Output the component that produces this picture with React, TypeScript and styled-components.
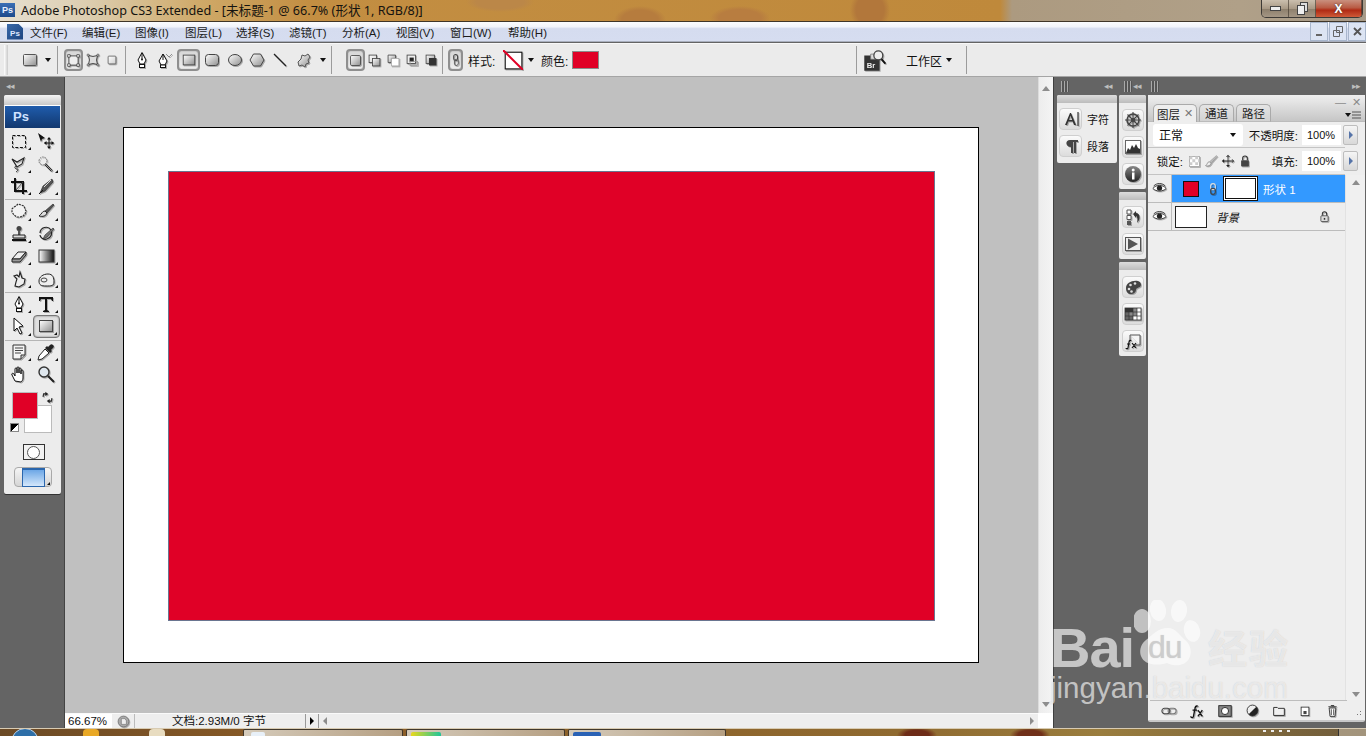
import React from "react";
import styled, { createGlobalStyle } from "styled-components";

const Global = createGlobalStyle`
  html, body { margin: 0; padding: 0; background: #646464; }
  * { box-sizing: border-box; }
`;

const CJK = `"Liberation Sans", "Noto Sans CJK SC", sans-serif`;

const Screen = styled.div`
  position: relative;
  width: 1366px;
  height: 736px;
  overflow: hidden;
  display: flex;
  flex-direction: column;
  font-family: ${CJK};
  font-size: 12px;
  color: #111;
  background: #646464;
`;

/* ---------- title bar ---------- */
const TitleBar = styled.header`
  height: 22px;
  flex: none;
  display: flex;
  align-items: flex-start;
  border-bottom: 1px solid #3f3528;
  background:
    radial-gradient(ellipse 26px 14px at 640px 20px, #b67c3e 0 70%, transparent 100%),
    radial-gradient(ellipse 34px 10px at 500px 2px, #bb8748 0 70%, transparent 100%),
    radial-gradient(ellipse 20px 22px at 870px 10px, #b2773b 0 70%, transparent 100%),
    radial-gradient(ellipse 30px 12px at 740px 18px, #b87d40 0 70%, transparent 100%),
    linear-gradient(90deg, #e6dfd0 0, #dccdaf 90px, #cfa968 200px, #c38e42 310px, #bf893b 1000px, #ac9a80 1012px, #b0a088 1240px, #a79a88 1366px);
`;
const AppIcon = styled.div`
  width: 15px;
  height: 14px;
  margin: 3px 6px 0 0;
  background: linear-gradient(#3b6fb5, #1d4a8c);
  color: #e8f0ff;
  font: bold 9px/14px "Liberation Sans", sans-serif;
  text-align: center;
`;
const TitleText = styled.div`
  font-family: "Noto Sans", "Noto Sans CJK SC", sans-serif;
  font-size: 12.6px;
  line-height: 21px;
  color: #15130f;
  white-space: nowrap;
`;
const WindowButtons = styled.div`
  margin-left: auto;
  margin-right: 3px;
  display: flex;
  height: 18px;
  border: 1px solid #3d3a36;
  border-top: none;
  border-radius: 0 0 5px 5px;
  overflow: hidden;
`;
const WinBtn = styled.div<{ $w: number; $close?: boolean }>`
  width: ${(p) => p.$w}px;
  display: flex;
  align-items: center;
  justify-content: center;
  border-right: 1px solid rgba(60, 50, 40, 0.6);
  color: #fff;
  font: bold 12px "Liberation Sans", sans-serif;
  text-shadow: 0 0 2px #333;
  background: ${(p) =>
    p.$close
      ? "linear-gradient(#c9907e, #b95c45 45%, #b02a14 60%, #cf5a38)"
      : "linear-gradient(#cbbfae, #a99a86 50%, #8e806d 55%, #a49684)"};
`;

/* ---------- menu bar ---------- */
const MenuBar = styled.nav`
  height: 20px;
  flex: none;
  display: flex;
  align-items: center;
  padding-left: 7px;
  background: linear-gradient(#fbfcfe 0, #f2f4fa 25%, #d5dcef 35%, #d6ddf0 100%);
  border-bottom: 1px solid #a9afbd;
`;
const DocIcon = styled.div`
  position: relative;
  width: 16px;
  height: 16px;
  margin-right: 7px;
  background: linear-gradient(135deg, #3a69a8, #1b4480);
  color: #dfe9ff;
  font: bold 8px/20px "Liberation Sans", sans-serif;
  text-align: center;
  clip-path: polygon(0 0, 70% 0, 100% 30%, 100% 100%, 0 100%);
`;
const MenuItem = styled.span<{ $w: number }>`
  width: ${(p) => p.$w}px;
  flex: none;
  font-size: 11.5px;
  white-space: nowrap;
  color: #1c1c1c;
`;
const MdiButtons = styled.div`
  margin-left: auto;
  display: flex;
  gap: 1px;
  height: 19px;
`;
const MdiBtn = styled.div`
  width: 18px;
  height: 19px;
  border: 1px solid #a8b6cc;
  background: #dce4f3;
  display: flex;
  align-items: center;
  justify-content: center;
  color: #555;
`;

/* ---------- options bar ---------- */
const OptionsBar = styled.div`
  height: 34px;
  flex: none;
  display: flex;
  align-items: stretch;
  margin-top: 1px;
  background: #ebebeb;
  border-top: 1px solid #f8f8f8;
  border-bottom: 1px solid #a5a5a5;
`;
const OptGroup = styled.div<{ $w: number; $pl?: number }>`
  width: ${(p) => p.$w}px;
  flex: none;
  display: flex;
  align-items: center;
  padding-left: ${(p) => p.$pl ?? 0}px;
  margin: 2px 0;
  border-right: 1px solid #9b9b9b;
`;
const Grip = styled.div`
  width: 4px;
  height: 30px;
  margin: 0 10px 0 4px;
  background: linear-gradient(90deg, #fff, #c9c9c9);
`;
const Slot = styled.div<{ $w: number; $on?: boolean }>`
  width: ${(p) => p.$w}px;
  height: 22px;
  flex: none;
  display: flex;
  align-items: center;
  justify-content: center;
  border-radius: 4px;
  ${(p) =>
    p.$on
      ? "border: 2px solid #8f8f8f; background: linear-gradient(#d6d6d6, #efefef); box-shadow: inset 0 0 1px #666;"
      : ""}
`;
const OptLabel = styled.span<{ $w: number; $ml?: number }>`
  width: ${(p) => p.$w}px;
  margin-left: ${(p) => p.$ml ?? 0}px;
  flex: none;
  font-size: 12px;
  white-space: nowrap;
  color: #111;
`;
const Caret = styled.span<{ $w?: number }>`
  width: ${(p) => p.$w ?? 9}px;
  flex: none;
  display: flex;
  justify-content: center;
  &::after {
    content: "";
    border-left: 3.5px solid transparent;
    border-right: 3.5px solid transparent;
    border-top: 4px solid #111;
  }
`;
const ColorChip = styled.div`
  width: 27px;
  height: 18px;
  flex: none;
  background: #e00026;
  border: 1px solid #8b8b8b;
`;

/* ---------- work area ---------- */
const Work = styled.main`
  flex: 1;
  min-height: 0;
  display: flex;
`;
const LeftDock = styled.aside`
  width: 65px;
  flex: none;
  background: #646464;
  border-right: 1px solid #444;
  padding-left: 4px;
`;
const GripRow = styled.div<{ $pl?: number }>`
  height: 18px;
  display: flex;
  align-items: center;
  padding: 0 5px 0 ${(p) => p.$pl ?? 2}px;
  color: #bdbdbd;
  font-size: 9px;
  letter-spacing: -1px;
`;
const GripLines = styled.span`
  width: 8px;
  height: 11px;
  background: repeating-linear-gradient(90deg, #a9a9a9 0 1px, #555 1px 3px);
`;
const Arrows = styled.span`
  margin-left: auto;
  display: flex;
`;
const ToolPanel = styled.div`
  width: 57px;
  height: 399px;
  background: #ececec;
  border-radius: 2px;
  box-shadow: 0 1px 0 #333;
`;
const PanelCap = styled.div`
  height: 10px;
  background: linear-gradient(#f4f4f4, #c9c9c9);
  border-radius: 3px 3px 0 0;
`;
const PsBadge = styled.div`
  height: 23px;
  margin: 0 1px;
  padding-left: 8px;
  background: linear-gradient(#1f5cac, #12386f);
  border-top: 1px solid #fff;
  color: #cfe2ff;
  font: bold 13px/22px "Liberation Sans", sans-serif;
`;
const ToolGrid = styled.div`
  display: grid;
  grid-template-columns: 27px 27px;
  justify-content: center;
  padding-top: 2px;
`;
const ToolRule = styled.div`
  grid-column: 1 / -1;
  height: 3px;
  margin: 0 -1px;
  border-bottom: 1px solid #b5b5b5;
`;
const ToolCell = styled.div<{ $on?: boolean; $mark?: boolean }>`
  position: relative;
  height: 22.4px;
  display: flex;
  align-items: center;
  justify-content: center;
  border-radius: 4px;
  ${(p) => (p.$on ? "border: 1px solid #777; box-shadow: inset 0 0 2px #666; background: #e0e0e0;" : "")}
  ${(p) =>
    p.$mark
      ? `&::after { content: ""; position: absolute; right: 2px; bottom: 2px; border-left: 3px solid transparent; border-bottom: 3px solid #111; }`
      : ""}
`;
const SwatchArea = styled.div`
  position: relative;
  height: 52px;
  margin-top: 7px;
`;
const FgSwatch = styled.div`
  position: absolute;
  left: 8px;
  top: 0;
  width: 26px;
  height: 27px;
  background: #e00026;
  border: 1px solid #bbb;
`;
const BgSwatch = styled.div`
  position: absolute;
  left: 20px;
  top: 13px;
  width: 28px;
  height: 28px;
  background: #fff;
  border: 1px solid #bbb;
`;
const SwapIcon = styled.div`
  position: absolute;
  left: 37px;
  top: -1px;
`;
const MiniDefault = styled.div`
  position: absolute;
  left: 6px;
  top: 31px;
  width: 9px;
  height: 9px;
  background: linear-gradient(135deg, #000 55%, #fff 55%);
  border: 1px solid #888;
`;
const MaskBtn = styled.div`
  width: 22px;
  height: 16px;
  margin: 0 auto;
  transform: translateX(1px);
  background: #f2f2f2;
  border: 1px solid #333;
  display: flex;
  align-items: center;
  justify-content: center;
  &::after {
    content: "";
    width: 11px;
    height: 11px;
    border-radius: 50%;
    background: #fff;
    border: 1px solid #555;
  }
`;
const ScreenBtn = styled.div`
  position: relative;
  width: 38px;
  height: 20px;
  margin: 7px 0 0 10px;
  border: 1px solid #a9a9a9;
  border-radius: 4px;
  background: linear-gradient(#f5f5f5, #d5d5d5);
  display: flex;
  justify-content: center;
  align-items: center;
  &::before {
    content: "";
    width: 21px;
    height: 16px;
    background: linear-gradient(#6da7e6, #d4e7fb);
    border: 1px solid #2a66ad;
    border-top-width: 2px;
  }
  &::after {
    content: "";
    position: absolute;
    right: 1px;
    bottom: 1px;
    border-left: 3px solid transparent;
    border-bottom: 3px solid #111;
  }
`;

/* ---------- canvas ---------- */
const Center = styled.section`
  width: 988px;
  flex: none;
  display: grid;
  grid-template-columns: 973px 15px;
  grid-template-rows: 636px 15px;
`;
const Canvas = styled.div`
  background: #c0c0c0;
  padding: 50px 0 0 58px;
`;
const Doc = styled.div`
  width: 856px;
  height: 536px;
  background: #fff;
  border: 1px solid #000;
  padding: 43px 0 0 44px;
`;
const Shape = styled.div`
  width: 767px;
  height: 450px;
  background: #e00026;
  border: 1px solid #6a7590;
`;
const VScroll = styled.div`
  background: linear-gradient(90deg, #ededed, #f4f4f4);
  border-left: 1px solid #dcdcdc;
  display: flex;
  flex-direction: column;
  justify-content: space-between;
  align-items: center;
  padding: 9px 0 6px;
`;
const Tri = styled.span<{ $dir: "up" | "down" | "left" | "right"; $c?: string }>`
  width: 0;
  height: 0;
  ${(p) => {
    const c = p.$c ?? "#8d8d8d";
    if (p.$dir === "up") return `border-left:4px solid transparent;border-right:4px solid transparent;border-bottom:5px solid ${c};`;
    if (p.$dir === "down") return `border-left:4px solid transparent;border-right:4px solid transparent;border-top:5px solid ${c};`;
    if (p.$dir === "left") return `border-top:4px solid transparent;border-bottom:4px solid transparent;border-right:4px solid ${c};`;
    return `border-top:4px solid transparent;border-bottom:4px solid transparent;border-left:4px solid ${c};`;
  }}
`;
const StatusBar = styled.div`
  display: flex;
  align-items: stretch;
  background: #eeeeee;
  border-top: 1px solid #fafafa;
`;
const Zoom = styled.div`
  width: 47px;
  background: #fff;
  padding-left: 3px;
  font-size: 11.5px;
  line-height: 15px;
  white-space: nowrap;
`;
const StatusIcon = styled.div`
  width: 23px;
  display: flex;
  align-items: center;
  justify-content: center;
  border-right: 1px solid #bbb;
`;
const DocInfo = styled.div`
  width: 170px;
  text-align: center;
  font-size: 11.5px;
  line-height: 15px;
  white-space: nowrap;
  padding-right: 2px;
`;
const StatusArrow = styled.div`
  width: 14px;
  display: flex;
  align-items: center;
  justify-content: center;
  border-left: 1px solid #999;
  border-right: 1px solid #999;
`;
const HScroll = styled.div`
  flex: 1;
  display: flex;
  align-items: center;
  justify-content: space-between;
  padding: 0 4px;
`;
const Corner = styled.div`
  background: #fff;
`;

/* ---------- right docks ---------- */
const RightDock = styled.aside`
  flex: 1;
  display: flex;
  background: #646464;
  border-left: 1px solid #3f3f3f;
  padding-left: 3px;
  gap: 2px;
`;
const DockCol = styled.div<{ $w: number }>`
  width: ${(p) => p.$w}px;
  flex: none;
  display: flex;
  flex-direction: column;
`;
const CollapsedPanel = styled.div<{ $h: number }>`
  height: ${(p) => p.$h}px;
  background: #ececec;
  border-radius: 2px;
  margin-bottom: 3px;
  flex: none;
`;
const PanelHead = styled.div`
  height: 8px;
  background: linear-gradient(#dcdcdc, #bcbcbc);
  border-radius: 2px 2px 0 0;
  margin-bottom: 5px;
`;
const PanelHeadBig = styled(PanelHead)`
  margin-bottom: 6px;
`;
const DockRow = styled.div`
  display: flex;
  align-items: center;
  gap: 5px;
  padding-left: 2px;
  margin-bottom: 5px;
`;
const DockBtn = styled.div`
  width: 23px;
  height: 22px;
  flex: none;
  border: 1px solid #cfcfcf;
  border-radius: 4px;
  background: linear-gradient(#fbfbfb, #dcdcdc);
  display: flex;
  align-items: center;
  justify-content: center;
`;
const DockBtnS = styled(DockBtn)`
  margin: 0 auto 5px;
  width: 22px;
`;
const DockText = styled.span`
  font-size: 11px;
  color: #111;
`;

const Layers = styled.div`
  position: relative;
  width: 217px;
  height: 627px;
  display: flex;
  flex-direction: column;
  background: #eeeeee;
  border-bottom: 2px solid #c8c8c8;
  border-radius: 2px;
`;
const LayersTop = styled.div`
  position: relative;
  height: 27px;
  flex: none;
  display: flex;
  align-items: flex-end;
  padding: 0 0 0 5px;
  gap: 2px;
  background: linear-gradient(#efefef, #c6c6c6);
  border-bottom: 1px solid #bbb;
`;
const Tab = styled.div<{ $w: number; $on?: boolean }>`
  width: ${(p) => p.$w}px;
  height: 18px;
  margin-bottom: -1px;
  display: flex;
  align-items: center;
  justify-content: center;
  gap: 4px;
  font-size: 11.5px;
  border: 1px solid #aaa;
  border-bottom: ${(p) => (p.$on ? "none" : "1px solid #bbb")};
  border-radius: 5px 5px 0 0;
  background: ${(p) => (p.$on ? "#eeeeee" : "linear-gradient(#e4e4e4, #d2d2d2)")};
  color: #222;
`;
const TabX = styled.span`
  color: #777;
  font-size: 11px;
`;
const PanelCtl = styled.div`
  position: absolute;
  top: 2px;
  right: 4px;
  display: flex;
  gap: 6px;
  color: #8a8a8a;
  font-size: 11px;
  line-height: 11px;
`;
const PanelMenu = styled.div`
  position: absolute;
  right: 4px;
  bottom: 2px;
  display: flex;
  align-items: center;
  gap: 1px;
`;
const LayerRow1 = styled.div`
  height: 26px;
  flex: none;
  display: flex;
  align-items: center;
  padding-left: 5px;
  border-bottom: 1px solid #c4c4c4;
  width: 197px;
`;
const LayerRow2 = styled(LayerRow1)`
  height: 27px;
`;
const BlendSelect = styled.div`
  width: 90px;
  height: 22px;
  flex: none;
  background: #fff;
  border-radius: 3px;
  display: flex;
  align-items: center;
  justify-content: space-between;
  padding: 0 6px;
  font-size: 12px;
`;
const FieldLabel = styled.span<{ $w: number }>`
  width: ${(p) => p.$w}px;
  flex: none;
  text-align: right;
  font-size: 11.5px;
  white-space: nowrap;
`;
const NumInput = styled.div`
  width: 39px;
  height: 20px;
  flex: none;
  margin-left: 4px;
  background: #fff;
  font-size: 11px;
  line-height: 20px;
  padding-left: 5px;
  color: #111;
`;
const NumArrow = styled.div`
  width: 15px;
  height: 20px;
  flex: none;
  margin-left: 2px;
  display: flex;
  align-items: center;
  justify-content: center;
  background: linear-gradient(#f5f5f5, #d8d8d8);
  border: 1px solid #bdbdbd;
  border-radius: 2px;
`;
const LockIcons = styled.div`
  display: flex;
  align-items: center;
  gap: 3px;
  width: 75px;
  padding-left: 5px;
  flex: none;
`;
const LayerBody = styled.div`
  flex: 1;
  display: flex;
  min-height: 0;
`;
const LayerList = styled.div`
  width: 197px;
  flex: none;
`;
const LayerRow = styled.div`
  display: flex;
  height: 28px;
  border-bottom: 1px solid #bcbcbc;
`;
const EyeCell = styled.div`
  width: 24px;
  flex: none;
  display: flex;
  align-items: center;
  justify-content: center;
  border-right: 1px solid #bcbcbc;
`;
const LayerMain = styled.div<{ $on?: boolean }>`
  flex: 1;
  display: flex;
  align-items: center;
  background: ${(p) => (p.$on ? "#3399ff" : "transparent")};
  color: ${(p) => (p.$on ? "#fff" : "#111")};
`;
const ShapeThumb = styled.div`
  width: 16px;
  height: 16px;
  margin: 0 7px 0 11px;
  background: #e00026;
  border: 1px solid #111;
`;
const MaskThumb = styled.div`
  width: 35px;
  height: 25px;
  margin: 0 5px 0 3px;
  background: #fff;
  border: 3px double #111;
  outline: 1px solid #111;
  outline-offset: -1px;
`;
const BgThumb = styled.div`
  width: 32px;
  height: 22px;
  margin: 0 9px 0 3px;
  background: #fff;
  border: 1px solid #222;
`;
const LayerName = styled.span<{ $italic?: boolean }>`
  font-size: 11.5px;
  font-style: ${(p) => (p.$italic ? "italic" : "normal")};
  flex: 1;
  white-space: nowrap;
`;
const LayerLock = styled.div`
  margin-right: 14px;
  display: flex;
`;
const LayerScroll = styled.div`
  flex: 1;
  display: flex;
  flex-direction: column;
  justify-content: space-between;
  align-items: center;
  padding: 5px 0 3px;
  border-left: 1px solid #e2e2e2;
  background: #f0f0f0;
`;
const LayersFoot = styled.div`
  height: 20px;
  flex: none;
  display: flex;
  align-items: center;
  padding-left: 7px;
  border-top: 1px solid #bdbdbd;
  width: 197px;
  margin-left: 2px;
`;
const FootSlot = styled.div<{ $w: number }>`
  width: ${(p) => p.$w}px;
  flex: none;
  display: flex;
  align-items: center;
  justify-content: center;
`;
const ResizeGrip = styled.div`
  position: absolute;
  right: 2px;
  bottom: 3px;
  width: 10px;
  height: 10px;
  background-image: radial-gradient(#777 0.7px, transparent 0.8px);
  background-size: 3px 3px;
  clip-path: polygon(100% 0, 100% 100%, 0 100%);
`;

/* ---------- taskbar ---------- */
const Taskbar = styled.footer`
  height: 8px;
  flex: none;
  display: flex;
  align-items: stretch;
  overflow: hidden;
  border-top: 1px solid #d8cbb2;
  background:
    radial-gradient(ellipse 20px 8px at 917px 6px, #6e2c18 0 60%, transparent 100%),
    radial-gradient(ellipse 20px 8px at 1030px 6px, #70301a 0 60%, transparent 100%),
    linear-gradient(90deg, #6b4a26 0, #8b5b26 300px, #8f6a30 900px, #9a7d3e 1100px, #6d5a3b 1366px);
`;
const Orb = styled.div`
  width: 28px;
  height: 28px;
  margin: -1px 0 0 11px;
  border-radius: 50%;
  flex: none;
  border: 1px solid #bcd0e4;
  background: #2e6fa8;
`;
const Quick = styled.div<{ $c: string; $ml: number }>`
  width: 16px;
  height: 16px;
  flex: none;
  margin-left: ${(p) => p.$ml}px;
  background: ${(p) => p.$c};
  border-radius: 4px 4px 0 0;
`;
const TaskBtn = styled.div<{ $w: number; $ml: number }>`
  width: ${(p) => p.$w}px;
  margin-left: ${(p) => p.$ml}px;
  flex: none;
  display: flex;
  justify-content: center;
  background: linear-gradient(90deg, #d5cbbb, #b59f82);
  border: 1px solid #40372b;
  border-bottom: none;
  border-radius: 2px 2px 0 0;
`;
const TaskIcon = styled.div<{ $c: string; $w: number; $ml: number }>`
  width: ${(p) => p.$w}px;
  height: 10px;
  margin: 2px 0 0 ${(p) => p.$ml}px;
  background: ${(p) => p.$c};
  border-radius: 2px 2px 0 0;
`;
const Clock = styled.div`
  margin-left: auto;
  width: 28px;
  margin-top: 1px;
  height: 2px;
  background: repeating-linear-gradient(90deg, #eee 0 3px, transparent 3px 8px);
  margin-right: 47px;
`;
const ShowDesk = styled.div`
  width: 28px;
  flex: none;
  background: rgba(215, 205, 190, 0.5);
  border-left: 1px solid #333;
`;

/* ---------- watermark ---------- */
const Watermark = styled.div`
  position: absolute;
  left: 1050px;
  top: 600px;
  width: 260px;
  height: 110px;
  pointer-events: none;
  color: rgba(255, 255, 255, 0.62);
  text-shadow: 0 0 1px rgba(120, 120, 120, 0.35);
`;
const WmTop = styled.div`
  display: flex;
  align-items: flex-start;
  height: 72px;
`;
const WmBai = styled.span`
  font: bold 56px/44px "Liberation Sans", sans-serif;
  margin-top: 26px;
  letter-spacing: -1px;
  width: 84px;
  flex: none;
`;
const WmPaw = styled.div`
  position: relative;
  width: 74px;
  flex: none;
  height: 72px;
`;
const WmDu = styled.span`
  position: absolute;
  left: 14px;
  top: 30px;
  font: 32px/34px "Liberation Sans", sans-serif;
  color: rgba(205, 205, 205, 0.9);
  letter-spacing: -1px;
`;
const WmCn = styled.span`
  font: bold 39px/44px "Noto Sans CJK SC", sans-serif;
  margin-top: 24px;
  letter-spacing: 2px;
`;
const WmUrl = styled.div`
  font: 29.5px/32px "Liberation Sans", sans-serif;
  white-space: nowrap;
`;

const Svg = styled.svg<{ $s: number }>`
  width: ${(p) => p.$s}px;
  height: ${(p) => p.$s}px;
  flex: none;
  display: block;
  filter: drop-shadow(1px 1px 0.6px rgba(0, 0, 0, 0.28));
`;
const Defs = styled.svg`
  position: absolute;
  width: 0;
  height: 0;
`;

type IconName = keyof typeof P;

const P = {
  shapeBox: <rect x="2.5" y="3.5" width="13" height="11" rx="1" fill="url(#gs)" stroke="#555" />,
  paths: (
    <>
      <rect x="3.5" y="3.5" width="11" height="11" fill="#eee" stroke="#333" />
      <path d="M2 2h3v3H2zM13 2h3v3h-3zM2 13h3v3H2zM13 13h3v3h-3z" fill="#fff" stroke="#222" strokeWidth=".8" />
    </>
  ),
  pathsD: (
    <>
      <path d="M4 4l5 1 5-1-1 5 1 5-5-1-5 1 1-5z" fill="#ddd" stroke="#333" />
      <path d="M2.5 2.5h2v2h-2zM13.5 2.5h2v2h-2zM2.5 13.5h2v2h-2zM13.5 13.5h2v2h-2z" fill="#fff" stroke="#333" strokeWidth=".7" />
    </>
  ),
  smallRect: <rect x="4" y="4" width="10" height="10" rx="1" fill="url(#gl)" stroke="#555" />,
  pen: (
    <>
      <path d="M9 1.5L13 9l-2 4H7L5 9z" fill="#fff" stroke="#111" />
      <path d="M9 2v6" stroke="#111" />
      <circle cx="9" cy="8.5" r="1" fill="#111" />
      <rect x="6.5" y="13.5" width="5" height="3" fill="#fff" stroke="#111" />
    </>
  ),
  freePen: (
    <>
      <path d="M7 3l4 7-2 4H5l-2-4z" fill="#fff" stroke="#111" />
      <path d="M7 3v6" stroke="#111" />
      <rect x="4.5" y="14" width="5" height="2.5" fill="#fff" stroke="#111" />
      <path d="M10 3l3 3 3-3" fill="none" stroke="#777" strokeWidth=".8" />
    </>
  ),
  rect: <rect x="2.5" y="3.5" width="13" height="11" fill="url(#gs)" stroke="#444" />,
  rounded: <rect x="2.5" y="3.5" width="13" height="11" rx="3" fill="url(#gs)" stroke="#444" />,
  ellipse: <ellipse cx="9" cy="9" rx="6.5" ry="5.5" fill="url(#gs)" stroke="#444" />,
  polygon: <path d="M5.5 3h7L16 9l-3.5 6h-7L2 9z" fill="url(#gs)" stroke="#444" />,
  line: <path d="M3 3l12 12" stroke="#222" strokeWidth="1.3" />,
  custom: <path d="M3 11l3-3 1-4 3 1 3-2 2 3-2 3 1 3-3 1-1 3-3-2-3 1z" fill="url(#gs)" stroke="#555" />,
  comb1: <rect x="3" y="3" width="12" height="12" rx="1.5" fill="url(#gs)" stroke="#444" />,
  comb2: (
    <>
      <rect x="2.5" y="2.5" width="9" height="9" fill="url(#gl)" stroke="#444" />
      <rect x="6.5" y="6.5" width="9" height="9" fill="url(#gs)" stroke="#444" />
    </>
  ),
  comb3: (
    <>
      <path d="M2.5 2.5h9v4h-5v5h-4z" fill="url(#gs)" stroke="#444" />
      <rect x="6.5" y="6.5" width="9" height="9" fill="#fff" stroke="#aaa" />
    </>
  ),
  comb4: (
    <>
      <rect x="2.5" y="2.5" width="10" height="10" fill="#eee" stroke="#444" />
      <rect x="5.5" y="5.5" width="5" height="5" fill="#222" />
      <rect x="6" y="10" width="9" height="5" fill="none" stroke="#999" />
    </>
  ),
  comb5: (
    <>
      <rect x="2.5" y="2.5" width="10" height="10" fill="url(#gs)" stroke="#444" />
      <path d="M6 6h9v9H6z" fill="#333" />
    </>
  ),
  link: (
    <>
      <rect x="6" y="2" width="5" height="8" rx="2.5" fill="none" stroke="#444" strokeWidth="1.3" />
      <rect x="7" y="8" width="5" height="8" rx="2.5" fill="none" stroke="#666" strokeWidth="1.3" />
    </>
  ),
  noStyle: (
    <>
      <rect x="2" y="2" width="15" height="15" fill="#fff" stroke="#111" />
      <path d="M0 0l18 18" stroke="#e00026" strokeWidth="1.8" />
    </>
  ),
  bridge: (
    <>
      <path d="M1 5h5l1 2h6v10H1z" fill="#333" />
      <path d="M6 4h4v4H6z" fill="#ddd" stroke="#777" strokeWidth=".6" />
      <circle cx="12" cy="5" r="3.5" fill="#eee" stroke="#444" />
      <path d="M14.5 8l3 3.5" stroke="#111" strokeWidth="1.5" />
      <text x="3" y="15" fontSize="6" fontWeight="bold" fill="#eee" fontFamily="Liberation Sans">Br</text>
    </>
  ),
  marquee: <rect x="2.5" y="3.5" width="13" height="12" fill="none" stroke="#111" strokeDasharray="3 1.6" />,
  move: (
    <>
      <path d="M1 1l7 5-3 1-1 3z" fill="#111" />
      <path d="M12 6v10M7.5 11h9" stroke="#111" />
      <path d="M12 5l-2 2.5h4zM12 17l-2-2.5h4zM7 11l2.5-2v4zM17 11l-2.5-2v4z" fill="#111" />
    </>
  ),
  lasso: (
    <>
      <path d="M2 4l5 3 7-4-2 6-5 3z" fill="none" stroke="#222" strokeWidth="1.1" />
      <path d="M6 11c-2 1-1 3 1 3s1 2-1 3" fill="none" stroke="#222" />
    </>
  ),
  wand: (
    <>
      <path d="M8 9l7 7" stroke="#222" strokeWidth="2.2" />
      <path d="M8 9l7 7" stroke="#eee" strokeWidth=".6" />
      <circle cx="6" cy="6" r="4" fill="none" stroke="#666" strokeDasharray="1.5 1" />
    </>
  ),
  crop: (
    <>
      <path d="M5 1v13h12M1 5h12v12" fill="none" stroke="#111" strokeWidth="2" />
      <path d="M6 13l7-8" stroke="#444" />
    </>
  ),
  slice: (
    <>
      <path d="M15 2L6 9l-3 7 5-2 8-9z" fill="#555" stroke="#222" strokeWidth=".6" />
      <path d="M14 3L7 10" stroke="#ddd" />
      <path d="M2 17l4-4" stroke="#111" />
    </>
  ),
  heal: (
    <path d="M4 5l2-1 2-2 3 1 3 1 1 3 1 2-1 3-2 2-3 1-3 0-3-2-2-3 0-3z" fill="#f2f2f2" stroke="#333" strokeWidth="1.2" strokeDasharray="2 1" />
  ),
  brush: (
    <>
      <path d="M16 2L8 9l2 2 7-8z" fill="#555" stroke="#222" strokeWidth=".6" />
      <path d="M8 9c-3 0-3 3-6 5 4 1 7 0 8-3z" fill="#ddd" stroke="#222" />
    </>
  ),
  stamp: (
    <>
      <circle cx="9" cy="3.5" r="2.5" fill="#444" />
      <path d="M8 6h2v4H8z" fill="#555" />
      <path d="M3 10h12v3H3z" fill="#ddd" stroke="#222" />
      <path d="M2 15h14" stroke="#111" strokeWidth="2" />
    </>
  ),
  history: (
    <>
      <path d="M3 8a6 6 0 0 1 11-3c2 3 0 8-4 9-3 1-7-1-7-4" fill="none" stroke="#222" strokeWidth="1.2" />
      <path d="M16 3l-8 7-2 4 4-2 7-8z" fill="#777" stroke="#222" strokeWidth=".6" />
    </>
  ),
  eraser: (
    <>
      <path d="M2 12l6-7h8l-6 7z" fill="#eee" stroke="#222" />
      <path d="M2 12v3h8l6-7V5l-6 7z" fill="#999" stroke="#222" />
    </>
  ),
  gradient: <rect x="2" y="3" width="15" height="12" fill="url(#gh)" stroke="#333" />,
  smudge: <path d="M10 2l2 6 3 1-1 5-5 3-4-1 1-4 1-3-3-3 3-1 2 2z" fill="#eee" stroke="#222" strokeWidth="1.1" />,
  sponge: (
    <>
      <path d="M2 11c0-4 4-7 9-7s6 4 6 8-3 4-8 4-7-1-7-5z" fill="#eee" stroke="#222" />
      <ellipse cx="7" cy="10" rx="3" ry="2" fill="none" stroke="#444" />
    </>
  ),
  type: <path d="M2 2h14v4h-1l-1-2h-4v11l2 1v1H6v-1l2-1V4H4L3 6H2z" fill="#111" />,
  select: <path d="M4 1l9 8-4 1 3 6-2 1-3-6-3 3z" fill="#fff" stroke="#111" />,
  notes: (
    <>
      <path d="M3 2h12v10l-4 4H3z" fill="#f4f4f4" stroke="#333" />
      <path d="M5 5h8M5 7.5h8M5 10h6" stroke="#444" />
      <path d="M11 16v-4h4" fill="#ccc" stroke="#333" />
    </>
  ),
  dropper: (
    <>
      <path d="M16 2a2 2 0 0 0-3 0l-2 2-1-1-2 2 5 5 2-2-1-1 2-2a2 2 0 0 0 0-3z" fill="#222" />
      <path d="M8 6l-6 7-1 4 4-1 7-6z" fill="#fff" stroke="#222" />
    </>
  ),
  hand: (
    <path d="M5 16L2 10c-1-2 1-2 2-1l1 2V4c0-1.5 2-1.5 2 0v4-5c0-1.5 2-1.5 2 0v5-4c0-1.5 2-1.5 2 0v5-3c0-1.5 2-1.5 2 0v7c0 2-1 3-2 4z" fill="#fff" stroke="#111" />
  ),
  zoom: (
    <>
      <circle cx="7" cy="7" r="5" fill="#dfe7ee" stroke="#333" strokeWidth="1.4" />
      <path d="M11 11l6 6" stroke="#222" strokeWidth="2" />
    </>
  ),
  swap: <path d="M3 3h3V1l4 3-4 3V5H4v3H2zM15 15h-3v2l-4-3 4-3v2h2v-3h2z" fill="#222" />,
  charA: (
    <>
      <path d="M3 15L8 3h1l5 12h-2l-1.3-3.500H6.300L5 15zM7 10h3L8.500 5.500z" fill="#333" />
      <path d="M16 2v14" stroke="#111" />
    </>
  ),
  para: <path d="M8 3h8v2h-2v11h-2V5h-1v11H9v-6C3 10 3 3 8 3z" fill="#444" />,
  nav: (
    <>
      <circle cx="9" cy="9" r="6" fill="none" stroke="#444" strokeWidth="1.5" />
      <circle cx="9" cy="9" r="2" fill="#444" />
      <path d="M9 1v16M1 9h16M3.5 3.5l11 11M14.5 3.5l-11 11" stroke="#444" strokeWidth="1.1" />
    </>
  ),
  histo: (
    <>
      <rect x="1.5" y="2.5" width="15" height="13" fill="#fff" stroke="#666" />
      <path d="M2 15l2-5 2 2 2-5 2 3 2-4 2 4 2 1v4z" fill="#333" />
    </>
  ),
  info: (
    <>
      <circle cx="9" cy="9" r="8" fill="url(#gd)" />
      <rect x="8" y="7.5" width="2.5" height="7" fill="#fff" />
      <circle cx="9.2" cy="5" r="1.5" fill="#fff" />
    </>
  ),
  hist: (
    <>
      <path d="M3 2h4v4H3z" fill="#fff" stroke="#555" />
      <path d="M3 7.5h4v4H3z" fill="#fff" stroke="#555" />
      <path d="M3 13h4v4H3z" fill="#555" />
      <path d="M9 6l3-3v2c4 0 5 6 1 10 1-4 0-7-1-7v2z" fill="#333" />
    </>
  ),
  actions: (
    <>
      <rect x="1.5" y="2.5" width="15" height="13" fill="#eee" stroke="#555" />
      <path d="M4 3.5l10 5.5-10 5.500z" fill="#555" />
    </>
  ),
  palette: (
    <>
      <path d="M2 10C2 5 8 2 14 3c3 1 4 4 2 6-2 1-4 1-4 3s-2 4-5 4-5-2-5-6z" fill="#444" />
      <circle cx="5" cy="11" r="1.3" fill="#ddd" />
      <circle cx="6.5" cy="7" r="1.3" fill="#ddd" />
      <circle cx="11" cy="5.5" r="1.3" fill="#ddd" />
      <circle cx="7.5" cy="13.500" r="1.3" fill="#ddd" />
    </>
  ),
  swatches: (
    <>
      <rect x="1" y="3" width="16" height="12" fill="#fff" />
      <path d="M1 3h8v4H1z" fill="#333" />
      <path d="M1 7h4v8H1zM5 11h4v4H5z" fill="#666" />
      <path d="M9 3h4v4H9zM5 7h8v4H5z" fill="#888" />
      <path d="M1 7h16M1 11h16M5 3v12M9 3v12M13 3v12" stroke="#333" strokeWidth=".7" />
      <rect x="1" y="3" width="16" height="12" fill="none" stroke="#333" strokeWidth=".8" />
    </>
  ),
  fxBox: (
    <>
      <path d="M6 3h10v10" fill="#f5f5f5" stroke="#555" />
      <path d="M6 3v5M11 13h5" stroke="#555" />
      <path d="M5 10c0-2 2-2 2-1M5 10l-1 6c0 1-2 1-2 0M3 12h3M8 11l4 5M12 11l-4 5" fill="none" stroke="#111" strokeWidth="1.2" />
    </>
  ),
  fxPlain: (
    <path d="M7 5c0-2 3-2 3-1M7 5L5 15c0 2-3 2-3 0M4 8h5M10 8l5 7M15 8l-5 7" fill="none" stroke="#111" strokeWidth="1.5" />
  ),
  eye: (
    <>
      <path d="M1 9c4-5 12-5 16 0-4 4-12 4-16 0z" fill="#fff" stroke="#222" />
      <circle cx="9" cy="8.5" r="3.2" fill="#222" />
      <path d="M2 6c4-4 10-4 14 0" fill="none" stroke="#222" />
    </>
  ),
  transparency: (
    <>
      <rect x="2" y="2" width="14" height="14" fill="#fff" stroke="#999" />
      <path d="M2 2h4v4H2zM10 2h4v4h-4zM6 6h4v4H6zM14 6h2v4h-2zM2 10h4v4H2zM10 10h4v4h-4z" fill="#ccc" />
    </>
  ),
  lockBrush: (
    <>
      <path d="M16 2L7 10l2 2 8-9z" fill="#bbb" stroke="#888" strokeWidth=".6" />
      <path d="M7 10c-3 0-2 3-5 5 4 1 6 0 7-3z" fill="#eee" stroke="#888" />
    </>
  ),
  cross: <path d="M9 1l-2.5 3h5zM9 17l-2.5-3h5zM1 9l3-2.5v5zM17 9l-3-2.5v5zM8.500 3h1v12h-1zM3 8.500h12v1H3z" fill="#222" />,
  lock: (
    <>
      <path d="M6 8V5.5a3 3 0 0 1 6 0V8" fill="none" stroke="#333" strokeWidth="1.4" />
      <rect x="4" y="8" width="10" height="8" rx="1" fill="#444" />
    </>
  ),
  lockOpen: (
    <>
      <path d="M6 8V5.5a3 3 0 0 1 6 0V8" fill="none" stroke="#333" strokeWidth="1.4" />
      <rect x="4" y="8" width="10" height="8" rx="1" fill="#ddd" stroke="#333" />
      <rect x="8" y="11" width="2" height="2.5" fill="#333" />
    </>
  ),
  chain: (
    <>
      <rect x="6" y="2" width="6" height="8" rx="3" fill="none" stroke="#ddd" strokeWidth="1.5" />
      <rect x="6" y="8" width="6" height="8" rx="3" fill="none" stroke="#444" strokeWidth="1.5" />
    </>
  ),
  fLink: (
    <>
      <rect x="1" y="6" width="9" height="6" rx="3" fill="none" stroke="#444" strokeWidth="1.2" />
      <rect x="8" y="6" width="9" height="6" rx="3" fill="none" stroke="#777" strokeWidth="1.2" />
    </>
  ),
  fMask: (
    <>
      <rect x="2" y="3" width="14" height="12" fill="#888" stroke="#222" />
      <circle cx="9" cy="9" r="4" fill="#fff" stroke="#222" />
    </>
  ),
  fAdj: (
    <>
      <circle cx="9" cy="9" r="6.5" fill="#eee" stroke="#222" />
      <path d="M13.6 4.4a6.5 6.5 0 0 1-9.2 9.200z" fill="#222" />
    </>
  ),
  fFolder: <path d="M3 5h4l1 1h7v8H3z" fill="#f0f0f0" stroke="#222" />,
  fNew: (
    <>
      <rect x="4" y="4" width="10" height="11" fill="#fff" stroke="#222" />
      <path d="M7 9h4v4H7z" fill="#444" />
    </>
  ),
  fTrash: (
    <>
      <path d="M5 6h8l-1 10H6z" fill="#fff" stroke="#222" />
      <path d="M4 4.5h10M7 3h4M7.5 7.500v7M10.500 7.500v7" stroke="#222" />
    </>
  ),
  status: (
    <>
      <circle cx="9" cy="9" r="7.5" fill="#aaa" stroke="#666" />
      <path d="M6 5h5l2 3v5H6z" fill="#eee" stroke="#555" strokeWidth=".7" />
    </>
  ),
};

const Icon = ({ n, s = 18 }: { n: IconName; s?: number }) => (
  <Svg $s={s} viewBox="0 0 18 18">
    {P[n]}
  </Svg>
);

const menus: [string, number][] = [
  ["文件(F)", 52],
  ["编辑(E)", 53],
  ["图像(I)", 50],
  ["图层(L)", 51],
  ["选择(S)", 53],
  ["滤镜(T)", 53],
  ["分析(A)", 54],
  ["视图(V)", 54],
  ["窗口(W)", 58],
  ["帮助(H)", 50],
];

const toolsA: [IconName, IconName][] = [
  ["marquee", "move"],
  ["lasso", "wand"],
  ["crop", "slice"],
];
const toolsB: [IconName, IconName][] = [
  ["heal", "brush"],
  ["stamp", "history"],
  ["eraser", "gradient"],
  ["smudge", "sponge"],
];
const shapeSlots: [IconName, number, boolean?][] = [
  ["pen", 20],
  ["freePen", 25],
  ["rect", 23, true],
  ["rounded", 23],
  ["ellipse", 23],
  ["polygon", 22],
  ["line", 24],
  ["custom", 23],
];

const Pair = ({ a, b, onB, markA = true, markB = true }: { a: IconName; b: IconName; onB?: boolean; markA?: boolean; markB?: boolean }) => (
  <>
    <ToolCell $mark={markA}>
      <Icon n={a} />
    </ToolCell>
    <ToolCell $mark={markB} $on={onB}>
      <Icon n={b} />
    </ToolCell>
  </>
);

export default function App() {
  return (
    <Screen>
      <Global />
      <Defs aria-hidden="true">
        <defs>
          <linearGradient id="gs" x1="0" y1="0" x2="1" y2="1">
            <stop offset="0" stopColor="#fff" />
            <stop offset="1" stopColor="#8f8f8f" />
          </linearGradient>
          <linearGradient id="gl" x1="0" y1="0" x2="1" y2="1">
            <stop offset="0" stopColor="#fff" />
            <stop offset="1" stopColor="#cfcfcf" />
          </linearGradient>
          <linearGradient id="gh" x1="0" y1="0" x2="1" y2="0">
            <stop offset="0" stopColor="#fff" />
            <stop offset="1" stopColor="#111" />
          </linearGradient>
          <linearGradient id="gd" x1="0" y1="0" x2="0" y2="1">
            <stop offset="0" stopColor="#888" />
            <stop offset="1" stopColor="#222" />
          </linearGradient>
        </defs>
      </Defs>

      <TitleBar>
        <AppIcon>Ps</AppIcon>
        <TitleText>Adobe Photoshop CS3 Extended - [未标题-1 @ 66.7% (形状 1, RGB/8)]</TitleText>
        <WindowButtons>
          <WinBtn $w={27}>
            <svg width="11" height="5" viewBox="0 0 11 5"><rect x=".5" y=".5" width="10" height="4" fill="#eee" stroke="#444" /></svg>
          </WinBtn>
          <WinBtn $w={27}>
            <svg width="11" height="13" viewBox="0 0 11 13"><rect x="3.5" y=".5" width="7" height="9" fill="#ddd" stroke="#444" /><rect x=".5" y="3.5" width="7" height="9" fill="#eee" stroke="#444" /></svg>
          </WinBtn>
          <WinBtn $w={46} $close>X</WinBtn>
        </WindowButtons>
      </TitleBar>

      <MenuBar>
        <DocIcon>Ps</DocIcon>
        {menus.map(([m, w]) => (
          <MenuItem key={m} $w={w}>{m}</MenuItem>
        ))}
        <MdiButtons>
          <MdiBtn>
            <svg width="8" height="8" viewBox="0 0 8 8"><rect x="1" y="6" width="6" height="2" fill="#666" /></svg>
          </MdiBtn>
          <MdiBtn>
            <svg width="10" height="11" viewBox="0 0 10 11"><path d="M3.5.5h6v6h-6zM.5 4.5h6v6h-6z" fill="#dce4f3" stroke="#666" /></svg>
          </MdiBtn>
          <MdiBtn>
            <svg width="9" height="9" viewBox="0 0 9 9"><path d="M1 1l7 7M8 1L1 8" stroke="#555" strokeWidth="1.8" /></svg>
          </MdiBtn>
        </MdiButtons>
      </MenuBar>

      <OptionsBar>
        <OptGroup $w={58}>
          <Grip />
          <Slot $w={24}><Icon n="shapeBox" s={18} /></Slot>
          <Caret $w={12} />
        </OptGroup>
        <OptGroup $w={68} $pl={6}>
          <Slot $w={19} $on><Icon n="paths" s={15} /></Slot>
          <Slot $w={19}><Icon n="pathsD" s={16} /></Slot>
          <Slot $w={20}><Icon n="smallRect" s={14} /></Slot>
        </OptGroup>
        <OptGroup $w={206} $pl={6}>
          {shapeSlots.map(([n, w, on]) => (
            <Slot key={n} $w={w} $on={on}><Icon n={n} s={on ? 16 : 18} /></Slot>
          ))}
          <Caret $w={16} />
        </OptGroup>
        <OptGroup $w={111} $pl={14}>
          <Slot $w={19} $on><Icon n="comb1" s={15} /></Slot>
          <Slot $w={18}><Icon n="comb2" s={15} /></Slot>
          <Slot $w={20}><Icon n="comb3" s={15} /></Slot>
          <Slot $w={18}><Icon n="comb4" s={15} /></Slot>
          <Slot $w={20}><Icon n="comb5" s={15} /></Slot>
        </OptGroup>
        <OptGroup $w={414} $pl={5}>
          <Slot $w={15} $on><Icon n="link" s={14} /></Slot>
          <OptLabel $w={36} $ml={5}>样式:</OptLabel>
          <Slot $w={18}><Icon n="noStyle" s={20} /></Slot>
          <Caret $w={18} />
          <OptLabel $w={31} $ml={1}>颜色:</OptLabel>
          <ColorChip />
        </OptGroup>
        <OptGroup $w={110} $pl={6}>
          <Slot $w={23}><Icon n="bridge" s={23} /></Slot>
          <OptLabel $w={38} $ml={20}>工作区</OptLabel>
          <Caret $w={10} />
        </OptGroup>
      </OptionsBar>

      <Work>
        <LeftDock>
          <GripRow $pl={2}>
            <span>◂◂</span>
          </GripRow>
          <ToolPanel>
            <PanelCap />
            <PsBadge>Ps</PsBadge>
            <ToolGrid>
              {toolsA.map(([a, b], i) => (
                <Pair key={a} a={a} b={b} markB={i > 0} />
              ))}
              <ToolRule />
              {toolsB.map(([a, b]) => (
                <Pair key={a} a={a} b={b} />
              ))}
              <ToolRule />
              <Pair a="pen" b="type" />
              <Pair a="select" b="rect" onB />
              <ToolRule />
              <Pair a="notes" b="dropper" />
              <Pair a="hand" b="zoom" markA={false} markB={false} />
            </ToolGrid>
            <SwatchArea>
              <BgSwatch />
              <FgSwatch />
              <SwapIcon><Icon n="swap" s={13} /></SwapIcon>
              <MiniDefault />
            </SwatchArea>
            <MaskBtn />
            <ScreenBtn />
          </ToolPanel>
        </LeftDock>

        <Center>
          <Canvas>
            <Doc>
              <Shape />
            </Doc>
          </Canvas>
          <VScroll>
            <Tri $dir="up" />
            <Tri $dir="down" />
          </VScroll>
          <StatusBar>
            <Zoom>66.67%</Zoom>
            <StatusIcon><Icon n="status" s={13} /></StatusIcon>
            <DocInfo>文档:2.93M/0 字节</DocInfo>
            <StatusArrow><Tri $dir="right" $c="#000" /></StatusArrow>
            <HScroll>
              <Tri $dir="left" />
              <Tri $dir="right" />
            </HScroll>
          </StatusBar>
          <Corner />
        </Center>

        <RightDock>
          <DockCol $w={60}>
            <GripRow $pl={4}>
              <GripLines />
              <Arrows>◂◂</Arrows>
            </GripRow>
            <CollapsedPanel $h={68}>
              <PanelHead />
              <DockRow>
                <DockBtn><Icon n="charA" /></DockBtn>
                <DockText>字符</DockText>
              </DockRow>
              <DockRow>
                <DockBtn><Icon n="para" /></DockBtn>
                <DockText>段落</DockText>
              </DockRow>
            </CollapsedPanel>
          </DockCol>
          <DockCol $w={27}>
            <GripRow $pl={5}>
              <GripLines />
              <Arrows>◂◂</Arrows>
            </GripRow>
            <CollapsedPanel $h={94}>
              <PanelHeadBig />
              <DockBtnS><Icon n="nav" /></DockBtnS>
              <DockBtnS><Icon n="histo" /></DockBtnS>
              <DockBtnS><Icon n="info" /></DockBtnS>
            </CollapsedPanel>
            <CollapsedPanel $h={67}>
              <PanelHeadBig />
              <DockBtnS><Icon n="hist" /></DockBtnS>
              <DockBtnS><Icon n="actions" /></DockBtnS>
            </CollapsedPanel>
            <CollapsedPanel $h={94}>
              <PanelHeadBig />
              <DockBtnS><Icon n="palette" /></DockBtnS>
              <DockBtnS><Icon n="swatches" /></DockBtnS>
              <DockBtnS><Icon n="fxBox" /></DockBtnS>
            </CollapsedPanel>
          </DockCol>
          <DockCol $w={217}>
            <GripRow $pl={3}>
              <GripLines />
              <Arrows>▸▸</Arrows>
            </GripRow>
            <Layers>
              <LayersTop>
                <Tab $w={44} $on>图层 <TabX>✕</TabX></Tab>
                <Tab $w={35}>通道</Tab>
                <Tab $w={35}>路径</Tab>
                <PanelCtl><span>—</span><span>✕</span></PanelCtl>
                <PanelMenu>
                  <Caret $w={7} />
                  <svg width="9" height="8" viewBox="0 0 9 8"><path d="M0 1h9M0 4h9M0 7h9" stroke="#555" /></svg>
                </PanelMenu>
              </LayersTop>
              <LayerRow1>
                <BlendSelect>
                  正常
                  <Caret $w={8} />
                </BlendSelect>
                <FieldLabel $w={55}>不透明度:</FieldLabel>
                <NumInput>100%</NumInput>
                <NumArrow><Tri $dir="right" $c="#5674a8" /></NumArrow>
              </LayerRow1>
              <LayerRow2>
                <FieldLabel $w={30}>锁定:</FieldLabel>
                <LockIcons>
                  <Icon n="transparency" s={13} />
                  <Icon n="lockBrush" s={14} />
                  <Icon n="cross" s={14} />
                  <Icon n="lock" s={14} />
                </LockIcons>
                <FieldLabel $w={40}>填充:</FieldLabel>
                <NumInput>100%</NumInput>
                <NumArrow><Tri $dir="right" $c="#5674a8" /></NumArrow>
              </LayerRow2>
              <LayerBody>
                <LayerList>
                  <LayerRow>
                    <EyeCell><Icon n="eye" s={15} /></EyeCell>
                    <LayerMain $on>
                      <ShapeThumb />
                      <Icon n="chain" s={14} />
                      <MaskThumb />
                      <LayerName>形状 1</LayerName>
                    </LayerMain>
                  </LayerRow>
                  <LayerRow>
                    <EyeCell><Icon n="eye" s={15} /></EyeCell>
                    <LayerMain>
                      <BgThumb />
                      <LayerName $italic>背景</LayerName>
                      <LayerLock><Icon n="lockOpen" s={13} /></LayerLock>
                    </LayerMain>
                  </LayerRow>
                </LayerList>
                <LayerScroll>
                  <Tri $dir="up" />
                  <Tri $dir="down" />
                </LayerScroll>
              </LayerBody>
              <LayersFoot>
                <FootSlot $w={24}><Icon n="fLink" s={16} /></FootSlot>
                <FootSlot $w={32}><Icon n="fxPlain" s={16} /></FootSlot>
                <FootSlot $w={24}><Icon n="fMask" s={16} /></FootSlot>
                <FootSlot $w={30}><Icon n="fAdj" s={15} /></FootSlot>
                <FootSlot $w={24}><Icon n="fFolder" s={16} /></FootSlot>
                <FootSlot $w={28}><Icon n="fNew" s={14} /></FootSlot>
                <FootSlot $w={26}><Icon n="fTrash" s={15} /></FootSlot>
              </LayersFoot>
              <ResizeGrip />
            </Layers>
          </DockCol>
        </RightDock>
      </Work>

      <Taskbar>
        <Orb />
        <Quick $c="#e9a825" $ml={44} />
        <Quick $c="#e8dcc0" $ml={50} />
        <TaskBtn $w={160} $ml={78}><TaskIcon $c="#e8f0f8" $w={14} $ml={-130} /></TaskBtn>
        <TaskBtn $w={159} $ml={3}><TaskIcon $c="linear-gradient(90deg,#e9d81b,#1fc59a)" $w={30} $ml={-120} /></TaskBtn>
        <TaskBtn $w={158} $ml={3}><TaskIcon $c="#2a62b5" $w={28} $ml={-120} /></TaskBtn>
        <Clock />
        <ShowDesk />
      </Taskbar>

      <Watermark>
        <WmTop>
          <WmBai>Bai</WmBai>
          <WmPaw>
            <svg width="68" height="72" viewBox="0 0 68 72">
              <g fill="rgba(255,255,255,.6)">
                <ellipse cx="8" cy="21" rx="9" ry="12" />
                <ellipse cx="24" cy="10" rx="8" ry="11" transform="rotate(-10 24 10)" />
                <ellipse cx="45" cy="11" rx="8" ry="11" transform="rotate(8 45 11)" />
                <ellipse cx="58" cy="31" rx="8" ry="11" transform="rotate(-15 58 31)" />
                <path d="M34 28c8 0 11 7 17 12 8 6 8 20-2 24-7 3-14 0-16-1-3 1-12 3-19 0C4 59 4 46 12 40c7-5 11-12 22-12z" />
              </g>
            </svg>
            <WmDu>du</WmDu>
          </WmPaw>
          <WmCn>经验</WmCn>
        </WmTop>
        <WmUrl>jingyan.baidu.com</WmUrl>
      </Watermark>
    </Screen>
  );
}
